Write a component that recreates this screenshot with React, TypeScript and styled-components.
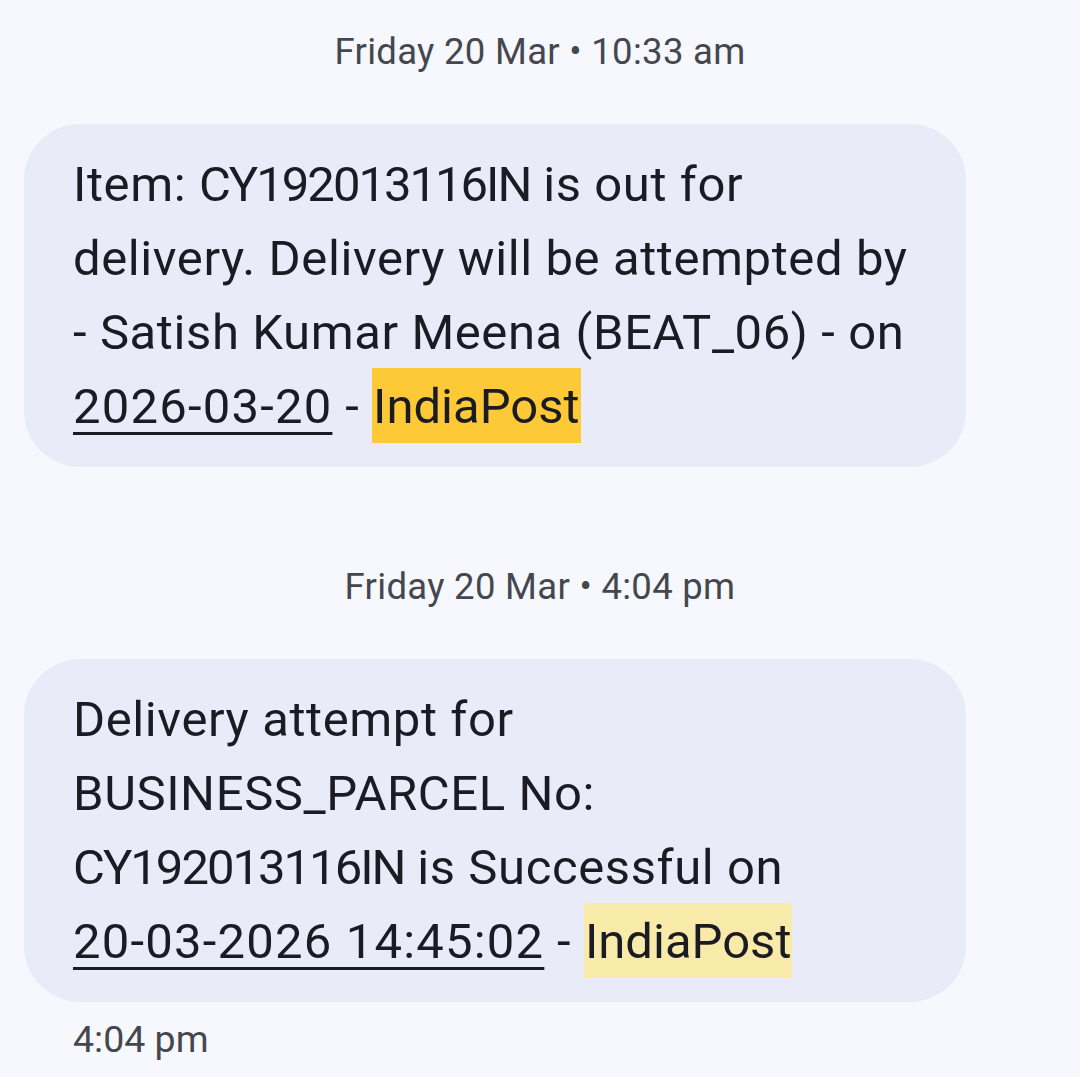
import React from "react";
import styled, { createGlobalStyle } from "styled-components";

const GlobalStyle = createGlobalStyle`
  html, body {
    margin: 0;
    padding: 0;
    background: #f6f8fe;
  }
  body {
    font-family: Roboto, "Noto Sans", "Liberation Sans", sans-serif;
  }
`;

type Msg = {
  header: string;
  lines: React.ReactNode[];
  footer?: string;
};

const Thread = styled.div`
  display: flex;
  flex-direction: column;
  padding: 28px 114px 0 24px;
  min-height: 1077px;
  box-sizing: border-box;
`;

const DateHeader = styled.div<{ first?: boolean }>`
  align-self: center;
  margin-left: 90px;
  margin-top: ${({ first }) => (first ? "0" : "96px")};
  margin-bottom: 48px;
  font-size: 36.5px;
  line-height: 48px;
  color: #45474f;
  letter-spacing: 0.3px;
`;

const Bubble = styled.div`
  background: #e9ecf8;
  border-radius: 56px;
  padding: 24px 40px 23px 49px;
  font-size: 49px;
  line-height: 74px;
  color: #1b1c23;
  letter-spacing: 0.6px;
`;

const Line = styled.div`
  white-space: nowrap;
`;

// tracking numbers are set a little tighter (narrow 1s in the original font)
const Code = styled.span`
  letter-spacing: -2px;
`;

const Link = styled.span`
  text-decoration: underline;
  text-decoration-thickness: 3px;
  text-underline-offset: 9px;
  letter-spacing: 1.2px;
`;

const Mark = styled.span<{ tone: "strong" | "soft" }>`
  background: ${({ tone }) => (tone === "strong" ? "#fdc936" : "#f8eaa8")};
  padding: 10px 1px 8px;
  letter-spacing: 0;
`;

const Sent = styled.div`
  margin-top: 13px;
  padding-left: 49px;
  font-size: 37.5px;
  line-height: 48px;
  color: #45474f;
`;

const messages: Msg[] = [
  {
    header: "Friday 20 Mar • 10:33 am",
    lines: [
      <>
        Item: <Code>CY192013116IN</Code> is out for
      </>,
      "delivery. Delivery will be attempted by",
      "- Satish Kumar Meena (BEAT_06) - on",
      <>
        <Link>2026-03-20</Link> - <Mark tone="strong">IndiaPost</Mark>
      </>,
    ],
  },
  {
    header: "Friday 20 Mar • 4:04 pm",
    lines: [
      "Delivery attempt for",
      "BUSINESS_PARCEL No:",
      <>
        <Code>CY192013116IN</Code> is Successful on
      </>,
      <>
        <Link>20-03-2026 14:45:02</Link> - <Mark tone="soft">IndiaPost</Mark>
      </>,
    ],
    footer: "4:04 pm",
  },
];

const App = () => {
  return (
    <>
      <GlobalStyle />
      <Thread>
        {messages.map((m, i) => (
          <React.Fragment key={`msg-${i}`}>
            <DateHeader first={i === 0}>{m.header}</DateHeader>
            <Bubble>
              {m.lines.map((l, j) => (
                <Line key={`line-${i}-${j}`}>{l}</Line>
              ))}
            </Bubble>
            {m.footer && <Sent>{m.footer}</Sent>}
          </React.Fragment>
        ))}
      </Thread>
    </>
  );
};

export default App;
